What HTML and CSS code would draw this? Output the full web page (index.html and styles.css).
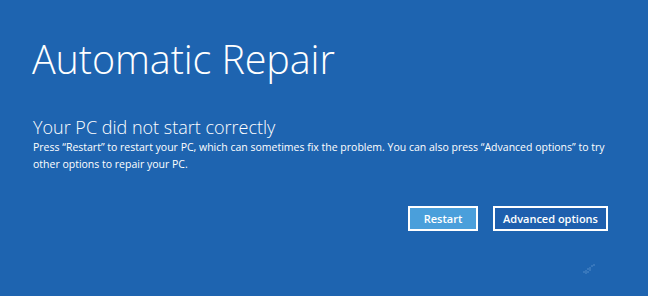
FILE: index.html
```html
<!DOCTYPE html>
<html>
<head>
<meta charset="utf-8">
<link rel="stylesheet" href="styles.css">
</head>
<body>
<main class="screen">
  <h1 class="title">Automatic Repair</h1>
  <h2 class="subtitle">Your PC did not start correctly</h2>
  <p class="message">Press “Restart” to restart your PC, which can sometimes fix the problem. You can also press “Advanced options” to try other options to repair your PC.</p>
  <div class="actions">
    <button class="btn btn-primary">Restart</button>
    <button class="btn btn-secondary">Advanced options</button>
  </div>
  <svg class="mark" width="14" height="12" viewBox="0 0 14 12">
    <g fill="#5a8fcb">
      <circle cx="2" cy="9" r="0.8"/><circle cx="4" cy="8" r="0.8"/><circle cx="6" cy="6" r="0.8"/>
      <circle cx="8" cy="5" r="0.8"/><circle cx="10" cy="3" r="0.8"/><circle cx="4" cy="10" r="0.8"/>
      <circle cx="6" cy="9" r="0.8"/><circle cx="8" cy="7" r="0.8"/><circle cx="12" cy="2" r="0.8"/>
    </g>
  </svg>
</main>
</body>
</html>
```
FILE: styles.css
```css
html, body {
  margin: 0;
  padding: 0;
  background: #1e64b0;
}
.screen {
  position: relative;
  width: 648px;
  height: 296px;
  box-sizing: border-box;
  padding: 34px 40px 0 32px;
  color: #ffffff;
  font-family: "Open Sans", "Noto Sans", sans-serif;
}
.title {
  margin: 0;
  font-weight: 300;
  font-size: 39.5px;
  line-height: 50px;
  letter-spacing: -0.1px;
}
.subtitle {
  margin: 31px 0 0 1px;
  font-weight: 300;
  font-size: 18px;
  line-height: 24px;
}
.message {
  margin: 0 0 0 1px;
  font-size: 10.5px;
  line-height: 17px;
  width: 580px;
}
.actions {
  display: flex;
  justify-content: flex-end;
  gap: 15px;
  margin-top: 33px;
  width: 576px;
}
.btn {
  height: 25px;
  box-sizing: border-box;
  border: 2px solid #ffffff;
  color: #ffffff;
  font-family: "Open Sans", "Noto Sans", sans-serif;
  font-weight: 600;
  font-size: 11px;
  padding: 0;
  white-space: nowrap;
}
.btn-primary {
  width: 70px;
  background: #4a9fdb;
}
.btn-secondary {
  width: 115px;
  background: #1e5fae;
}
.mark {
  position: absolute;
  left: 582px;
  top: 263px;
}
```
